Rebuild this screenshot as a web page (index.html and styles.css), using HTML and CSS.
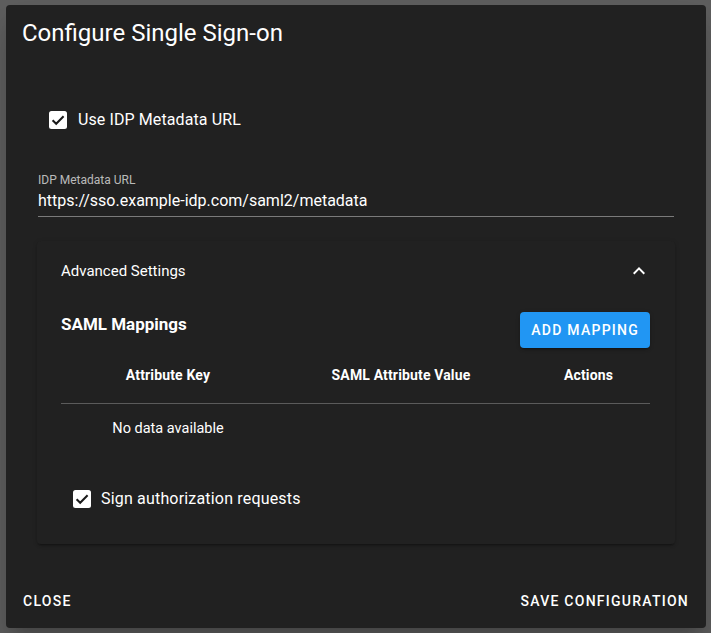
FILE: index.html
```html
<!DOCTYPE html>
<html lang="en">
<head>
<meta charset="utf-8">
<title>Configure Single Sign-on</title>
<link rel="stylesheet" href="styles.css">
</head>
<body>
<div class="dialog">
  <h1 class="title">Configure Single Sign-on</h1>
  <div class="content">
    <label class="check check-main">
      <svg class="box" width="18" height="18" viewBox="0 0 18 18"><rect x="0" y="0" width="18" height="18" rx="2.5" fill="#fff"/><path d="M3.6 9.2 L7.2 12.8 L14.6 5.2" fill="none" stroke="#1a1a1a" stroke-width="2"/></svg>
      <span class="check-text">Use IDP Metadata URL</span>
    </label>
    <div class="field">
      <div class="field-label">IDP Metadata URL</div>
      <div class="field-value">https://sso.example-idp.com/saml2/metadata</div>
    </div>
    <section class="panel">
      <div class="panel-header">
        <span class="panel-title">Advanced Settings</span>
        <svg class="chev" width="24" height="24" viewBox="0 0 24 24"><path d="M7.41 15.41L12 10.83l4.59 4.58L18 14l-6-6-6 6z" fill="#fff"/></svg>
      </div>
      <div class="panel-body">
        <div class="mappings-head">
          <h2 class="mappings-title">SAML Mappings</h2>
          <button class="btn-primary">ADD MAPPING</button>
        </div>
        <table class="table">
          <colgroup><col class="c1"><col class="c2"><col class="c3"></colgroup>
          <thead>
            <tr><th>Attribute Key</th><th>SAML Attribute Value</th><th>Actions</th></tr>
          </thead>
          <tbody>
            <tr><td class="empty">No data available</td><td></td><td></td></tr>
          </tbody>
        </table>
        <label class="check check-sign">
          <svg class="box" width="18" height="18" viewBox="0 0 18 18"><rect x="0" y="0" width="18" height="18" rx="2.5" fill="#fff"/><path d="M3.6 9.2 L7.2 12.8 L14.6 5.2" fill="none" stroke="#1a1a1a" stroke-width="2"/></svg>
          <span class="check-text">Sign authorization requests</span>
        </label>
      </div>
    </section>
  </div>
  <div class="actions">
    <button class="btn-text">CLOSE</button>
    <button class="btn-text">SAVE CONFIGURATION</button>
  </div>
</div>
</body>
</html>
```

FILE: styles.css
```css
* { box-sizing: border-box; }
html, body { margin: 0; padding: 0; }
body {
  background: #5e5e5e;
  font-family: Roboto, "Liberation Sans", Arial, sans-serif;
  color: #fff;
  width: 711px;
  height: 633px;
  overflow: hidden;
}
.dialog {
  margin: 5px 0 0 6px;
  width: 700px;
  height: 623px;
  background: #212121;
  border-radius: 4px;
  box-shadow: 0 11px 15px -7px rgba(0,0,0,.2), 0 24px 38px 3px rgba(0,0,0,.14);
  display: flex;
  flex-direction: column;
}
.title {
  margin: 0;
  padding: 12px 16px 0;
  font-size: 24px;
  font-weight: 400;
  line-height: 32px;
  letter-spacing: 0;
}
.content {
  padding: 0 32px;
}
.check {
  display: flex;
  align-items: center;
  height: 24px;
  font-size: 16px;
  line-height: 24px;
}
.check .box { flex: none; display: block; }
.check-main { margin-top: 59px; padding-left: 10.5px; }
.check-main .check-text { margin-left: 11.5px; letter-spacing: 0.1px; }
.field { margin-top: 40px; }
.field-label {
  font-size: 12px;
  line-height: 16px;
  color: rgba(255,255,255,.7);
}
.field-value {
  margin-top: 1px;
  font-size: 16px;
  line-height: 24px;
  padding-bottom: 3px;
  border-bottom: 1px solid #7a7a7a;
}
.panel {
  margin: 24px -1px 0;
  background: #212121;
  border-radius: 4px;
  box-shadow: 0 3px 1px -2px rgba(0,0,0,.2), 0 2px 2px 0 rgba(0,0,0,.14), 0 1px 5px 0 rgba(0,0,0,.12);
}
.panel-header {
  height: 60px;
  padding: 0 24px;
  display: flex;
  align-items: center;
  justify-content: space-between;
}
.panel-title { font-size: 15px; line-height: 20px; }
.chev { display: block; }
.panel-body { padding: 11px 25px 33px 24px; }
.mappings-head {
  display: flex;
  justify-content: space-between;
  align-items: flex-start;
  height: 36px;
}
.mappings-title {
  margin: 0;
  font-size: 17px;
  font-weight: 700;
  line-height: 24px;
}
.btn-primary {
  height: 36px;
  padding: 0 11px;
  border: 0;
  border-radius: 4px;
  background: #2196f3;
  color: #fff;
  font-family: inherit;
  font-size: 14px;
  font-weight: 500;
  letter-spacing: 1.25px;
  box-shadow: 0 3px 1px -2px rgba(0,0,0,.2), 0 2px 2px 0 rgba(0,0,0,.14), 0 1px 5px 0 rgba(0,0,0,.12);
}
.table {
  width: 100%;
  border-collapse: collapse;
  table-layout: fixed;
}
.c1 { width: 214px; }
.c2 { width: 252px; }
.c3 { width: 123px; }
.table th {
  height: 55px;
  padding: 0;
  font-size: 14px;
  font-weight: 700;
  line-height: 20px;
  letter-spacing: 0.15px;
  text-align: center;
  border-bottom: 1px solid rgba(255,255,255,.14);
}
.table td {
  height: 52px;
  padding: 0;
  font-size: 14.5px;
  line-height: 20px;
  text-align: center;
}
.check-sign { margin-top: 32px; padding-left: 12px; }
.check-sign .check-text { margin-left: 10px; letter-spacing: 0.18px; }
.actions {
  margin-top: auto;
  padding: 0 9px 9px;
  display: flex;
  justify-content: space-between;
}
.btn-text {
  height: 36px;
  padding: 0 8px;
  border: 0;
  background: transparent;
  color: #fff;
  font-family: inherit;
  font-size: 14px;
  font-weight: 500;
  letter-spacing: 1.25px;
}
```
